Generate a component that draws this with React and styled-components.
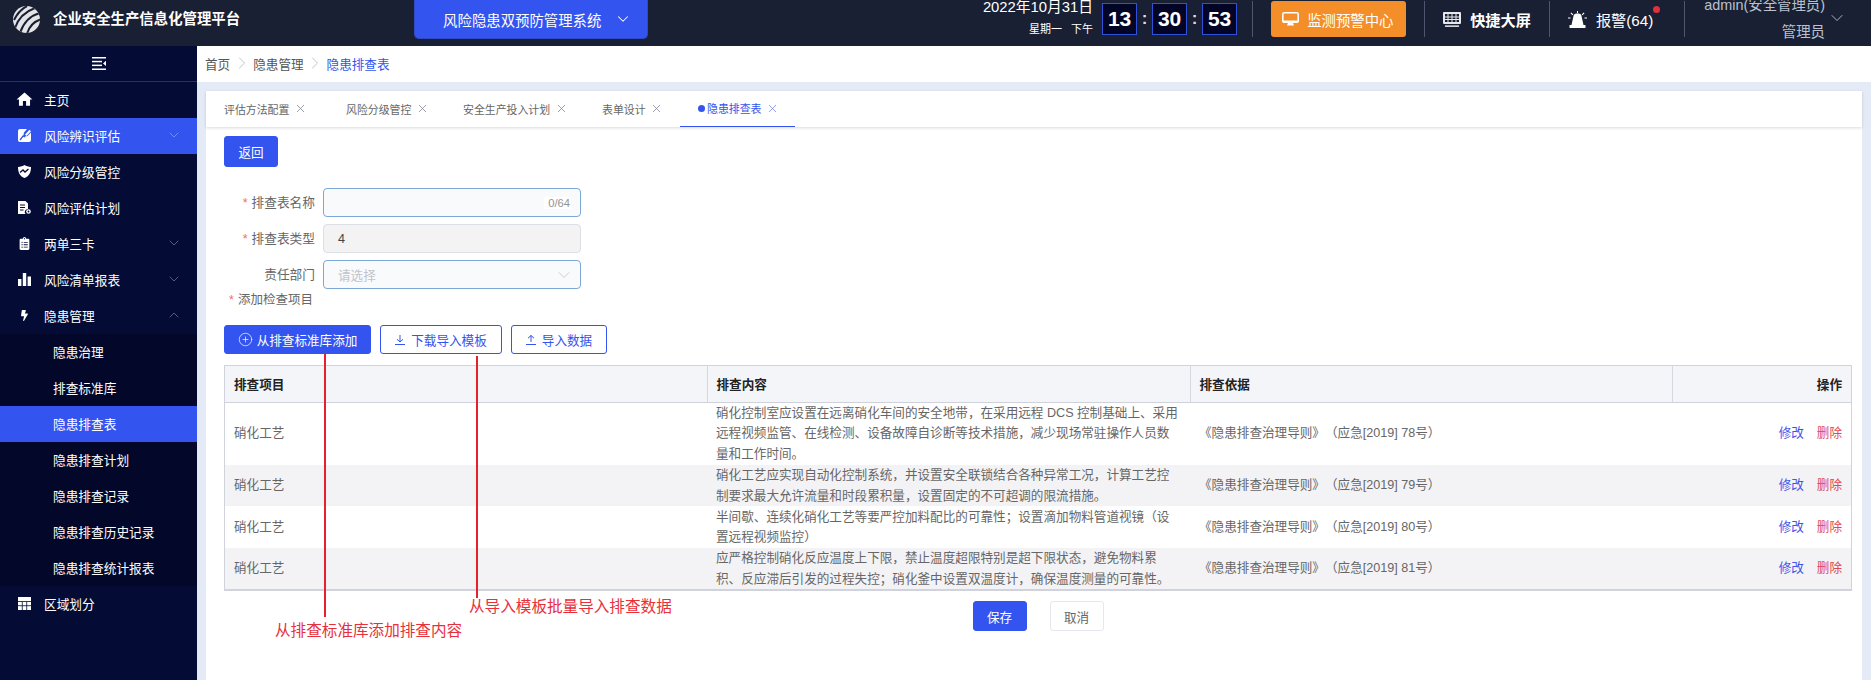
import React from 'react';
import styled, { createGlobalStyle } from 'styled-components';
import { ChevronDown, ChevronUp, ChevronRight, X, CirclePlus } from 'lucide-react';
import { FaBolt, FaClipboardList } from 'react-icons/fa';
import { MdHome } from 'react-icons/md';

const Global = createGlobalStyle`
  html, body { margin: 0; padding: 0; width: 100%; height: 100%; overflow: hidden; background: #fff; }
  #root { width: 100%; height: 100%; }
  * { box-sizing: border-box; }
  body { font-family: "Liberation Sans", "Noto Sans CJK SC", sans-serif; font-size: 12.6px; color: #606266; text-spacing-trim: space-all; }
`;

const Page = styled.div`display: flex; flex-direction: column; width: 1871px; height: 680px; overflow: hidden;`;

const Header = styled.header`
  flex: none; height: 46px; background: #1a2033; display: flex; align-items: flex-start; overflow: hidden; color: #fff;
`;
const LogoWrap = styled.div`margin: 6px 0 0 13px; width: 27px; height: 27px; flex: none;`;
const Title = styled.h1`
  margin: 0 0 0 13px; font-size: 14.4px; font-weight: 700; line-height: 39px; color: #fff; white-space: nowrap;
`;
const SystemButton = styled.button`
  margin-left: 174px; width: 234px; height: 39px; flex: none; border: 1px solid #2f4ac4; border-top: 0; border-radius: 0 0 5px 5px;
  background: #3354ee; color: #fff; font: inherit; font-size: 14.4px; display: flex; align-items: center; padding: 0 0 0 28px; gap: 13px;
`;
const HeaderRight = styled.div`margin-left: auto; display: flex; align-items: flex-start; padding-right: 24px;`;
const DateBlock = styled.div`
  margin-top: -4px; text-align: right; line-height: 22px; width: 112px; white-space: nowrap;
`;
const DateLine = styled.div`font-size: ${p => p.$small ? '11px' : '14.8px'};`;
const Clock = styled.div`margin: 3px 0 0 9px; display: flex; align-items: center;`;
const ClockBox = styled.div`
  width: 35px; height: 32px; background: #020526; border: 1px solid #2f52d8; font-size: 21px; font-weight: 700; color: #fff;
  display: flex; align-items: center; justify-content: center;
`;
const Colon = styled.span`width: 15px; text-align: center; font-size: 17px; font-weight: 700; color: #ddd; line-height: 28px;`;
const Divider = styled.div`width: 1px; height: 36px; margin: 1px 0 0 ${p => p.$ml || 18}px; background: #4d566e;`;
const AlertButton = styled.button`
  margin: 1px 0 0 18px; width: 135px; height: 36px; background: #f38e29; border: 0; border-radius: 3px; color: #fff; font: inherit; font-size: 14.4px;
  display: flex; align-items: center; padding: 0 0 0 11px; gap: 8px; white-space: nowrap;
`;
const HeaderLink = styled.div`
  margin-left: 18px; height: 38px; display: flex; align-items: center; gap: 9px; color: #fff; white-space: nowrap;
  font-size: 15.2px; font-weight: ${p => p.$bold ? 700 : 400}; position: relative;
`;
const RedDot = styled.span`
  position: absolute; right: -7px; top: 6px; width: 7px; height: 7px; border-radius: 50%; background: #e0303c;
`;
const UserBlock = styled.div`
  margin: -8px 0 0 19px; text-align: right; line-height: 27px; color: #b9c0cf; font-size: 14.4px; white-space: nowrap;
`;
const UserChevron = styled.div`margin: 8px 0 0 2px; color: #b9c0cf; display: flex;`;

const Body = styled.div`flex: 1; display: flex; min-height: 0;`;
const Sidebar = styled.nav`width: 197px; flex: none; background: #040c36; color: #fff;`;
const Collapse = styled.div`height: 36px; border-bottom: 1px solid #2c3356; display: flex; align-items: center; justify-content: center;`;
const MenuItem = styled.div`
  height: 36px; display: flex; align-items: center; padding: 0 0 2px 17px; font-size: 12.7px; color: #fff; white-space: nowrap;
  background: ${p => p.$active ? '#3354ee' : 'transparent'};
`;
const MenuIcon = styled.span`
  width: 14px; height: 14px; display: flex; align-items: center; justify-content: center; margin-right: 13px; flex: none;
  svg { flex: none; }
`;
const MenuArrow = styled.span`margin-left: auto; margin-right: 15px; display: flex; color: ${p => p.$active ? '#8b9bf0' : '#6b7192'};`;
const SubMenu = styled.div`background: #03082b;`;
const SubItem = styled.div`
  height: 36px; display: flex; align-items: center; padding: 0 0 2px 53px; font-size: 12.7px; color: #fff;
  background: ${p => p.$active ? '#3354ee' : 'transparent'};
`;

const Main = styled.main`flex: 1; min-width: 0; background: #e4eaf6; display: flex; flex-direction: column;`;
const Breadcrumb = styled.div`
  flex: none; height: 36px; background: #fff; display: flex; align-items: center; padding: 0 0 2px 8px; font-size: 12.6px; color: #555;
`;
const Crumb = styled.span`color: ${p => p.$current ? '#3354ee' : '#555'};`;
const CrumbSep = styled.span`display: flex; color: #c0c4cc; margin: 0 1.5px;`;
const Panel = styled.section`
  position: relative; flex: 1; margin: 9px 9px 0; background: #fff; display: flex; flex-direction: column; min-height: 0;
`;
const Tabs = styled.div`flex: none; height: 36px; display: flex; box-shadow: 0 1px 3px rgba(0,0,0,.15);`;
const Tab = styled.div`
  width: ${p => p.$w}px; height: 36px; padding: 0 0 1px 18px; display: flex; align-items: center; font-size: 10.9px; white-space: nowrap;
  color: ${p => p.$active ? '#3354ee' : '#666'};
  border-bottom: ${p => p.$active ? '1px solid #3354ee' : '0'};
`;
const TabDot = styled.span`width: 7px; height: 7px; border-radius: 50%; background: #3354ee; margin-right: 2px;`;
const TabClose = styled.span`
  display: flex; width: 8px; justify-content: center; margin-left: 7px; color: ${p => p.$active ? '#7f8bee' : '#888d99'};
  svg { flex: none; }
`;
const Content = styled.div`flex: 1; padding: 9px 10px 0 18px; display: flex; flex-direction: column; align-items: flex-start;`;
const Button = styled.button`
  height: ${p => p.$h || 29}px; width: ${p => p.$w}px; flex: none; border-radius: 3px; font: inherit; font-size: 12.6px; white-space: nowrap; padding: 0;
  display: flex; align-items: center; justify-content: center; gap: ${p => p.$gap || 0}px;
  background: ${p => p.$variant === 'outline' || p.$variant === 'plain' ? '#fff' : '#3354ee'};
  color: ${p => p.$variant === 'outline' ? '#3354ee' : p.$variant === 'plain' ? '#666' : '#fff'};
  border: 1px solid ${p => p.$variant === 'plain' ? '#e4e7ed' : '#3354ee'};
`;
const Form = styled.div`margin-top: 21px; display: flex; flex-direction: column; gap: 7px;`;
const FormRow = styled.div`display: flex; align-items: center; height: 29px;`;
const Label = styled.label`width: 91px; text-align: right; margin-right: 8px; padding-bottom: 2px; font-size: 12.7px; color: #666; white-space: nowrap;`;
const Star = styled.span`color: #f56c6c; margin-right: 4px;`;
const Field = styled.div`
  width: 258px; height: 29px; border-radius: 4px; display: flex; align-items: center; padding: 0 ${p => p.$placeholder ? 6 : 9}px 0 14px;
  background: ${p => p.$disabled ? '#f3f3f3' : '#f8fafc'};
  border: 1px solid ${p => p.$disabled ? '#dcdfe6' : '#7ba8d4'};
  color: ${p => p.$placeholder ? '#c0c4cc' : '#444'};
`;
const Counter = styled.span`margin-left: auto; background: #fff; font-size: 11.2px; padding: 0 1px 0 4px; color: #909399;`;
const FieldChevron = styled.span`margin-left: auto; display: flex; color: #c0c4cc;`;
const SectionLabel = styled.div`margin: 4px 0 0 5px; font-size: 12.5px; line-height: 14px; height: 14px; color: #666; white-space: nowrap;`;
const Toolbar = styled.div`margin-top: 18px; display: flex; gap: 9px;`;
const TableWrap = styled.div`margin-top: 11px; width: 1628px; border: 1px solid #d0d3dc; border-bottom-width: 2px;`;
const Grid = styled.table`width: 1626px; border-collapse: collapse; table-layout: fixed; font-size: 12.6px;`;
const Th = styled.th`
  height: 36px; padding: 0 9px; background: #f4f5f9; color: #222; font-weight: 700; font-size: 12.6px;
  text-align: ${p => p.$right ? 'right' : 'left'};
  border-bottom: 1px solid #cfd2da; border-right: ${p => p.$last ? '0' : '1px solid #d6d8e0'};
`;
const Tr = styled.tr`height: ${p => p.$h}px; background: ${p => p.$alt ? '#f3f3f6' : '#fff'};`;
const Td = styled.td`
  padding: 0 9px; color: #666; line-height: 20.6px; white-space: nowrap; vertical-align: middle; text-align: ${p => p.$right ? 'right' : 'left'};
`;
const Line = styled.div`white-space: nowrap;`;
const ActionLink = styled.a`margin-left: 13px; color: ${p => p.$danger ? '#e0484f' : '#3f56e8'};`;
const Footer = styled.div`width: 1628px; margin-top: 10px; display: flex; justify-content: center; gap: 23px;`;

const RedLine = styled.div`
  position: absolute; width: 2px; left: ${p => p.$x}px; top: ${p => p.$y}px; height: ${p => p.$h}px; background: #e6212e;
`;
const Note = styled.div`
  position: absolute; left: ${p => p.$x}px; top: ${p => p.$y}px; color: #e8303c; font-size: 15.6px; line-height: 20px; white-space: nowrap;
`;

const Logo = () => (
  <svg width="27" height="27" viewBox="0 0 27 27">
    <defs><clipPath id="lg"><circle cx="13.5" cy="13.5" r="13.5" /></clipPath></defs>
    <g clipPath="url(#lg)">
      <rect width="27" height="27" fill="#e4e4e6" />
      <g fill="none" stroke="#1a2033" strokeWidth="2">
        <path d="M1 14C4 8 8 3 14 0" />
        <path d="M2 22C5 13 11 6 22 2" />
        <path d="M7 27C10 18 16 10 27 7" />
        <path d="M14 28C16 21 21 15 29 13" />
        <path d="M21 29C22 25 25 22 29 20" />
      </g>
    </g>
  </svg>
);
const CollapseIcon = () => (
  <svg width="14" height="13" viewBox="0 0 14 13" fill="#fff">
    <rect width="14" height="1.5" />
    <rect y="3.8" width="10" height="1.5" />
    <rect y="7.6" width="10" height="1.5" />
    <rect y="11.5" width="14" height="1.5" />
    <path d="M14 3.8v5.2l-3-2.6z" />
  </svg>
);
const EditIcon = () => (
  <svg width="13" height="13" viewBox="0 0 13 13">
    <path d="M2 0h7L6 3.500 5 8l4.500-1L13 3.500V11a2 2 0 0 1-2 2H2a2 2 0 0 1-2-2V2a2 2 0 0 1 2-2z" fill="#fff" />
    <path d="M2 11L5 7l2 1" fill="none" stroke="#3354ee" strokeWidth="1.300" />
    <path d="M7 5.500L11.500.8 13 2.200 8.500 7z" fill="#fff" />
  </svg>
);
const ShieldIcon = () => (
  <svg width="13" height="13" viewBox="0 0 13 13">
    <path d="M6.5 0C8 1.2 10.5 1.8 13 2c0 5-1.5 9-6.5 11C1.500 11 0 7 0 2c2.500-.2 5-.8 6.500-2z" fill="#fff" />
    <path d="M2 7.500L5 5l2 2 3.500-3" fill="none" stroke="#040c36" strokeWidth="1.300" />
  </svg>
);
const DocIcon = () => (
  <svg width="13" height="13" viewBox="0 0 13 13">
    <path d="M0 0h7.500L10 2.500V8a3 3 0 0 0-2.500 5H0z" fill="#fff" />
    <path d="M2 4h5M2 6.500h5M2 9h3.500" stroke="#040c36" strokeWidth="1" />
    <circle cx="10.500" cy="10.500" r="2.300" fill="#fff" />
    <circle cx="10.500" cy="10.500" r=".9" fill="#040c36" />
  </svg>
);
const BarsIcon = () => (
  <svg width="13" height="13" viewBox="0 0 13 13" fill="#fff">
    <rect y="6" width="3.400" height="7" />
    <rect x="4.800" y="0" width="3.400" height="13" />
    <rect x="9.600" y="3.500" width="3.400" height="9.500" />
  </svg>
);
const TableIcon = () => (
  <svg width="13" height="13" viewBox="0 0 13 13">
    <rect width="13" height="13" fill="#fff" />
    <path d="M0 4.500h13M0 8.700h13M4.300 4.500V13M8.700 4.500V13" stroke="#040c36" strokeWidth=".8" />
  </svg>
);
const MonitorIcon = () => (
  <svg width="17" height="14" viewBox="0 0 17 14">
    <rect x=".8" y=".8" width="15.400" height="9.400" rx="1.200" fill="none" stroke="#fff" strokeWidth="1.600" />
    <rect x="1" y="8.500" width="15" height="2.200" fill="#fff" />
    <path d="M6 11h5l1 2.500H5z" fill="#fff" />
  </svg>
);
const ScreenIcon = () => (
  <svg width="18" height="15" viewBox="0 0 18 15" fill="#e8e8ec">
    <path d="M1 0h16a1 1 0 0 1 1 1v10a1 1 0 0 1-1 1H1a1 1 0 0 1-1-1V1a1 1 0 0 1 1-1zm1 2v8h14V2z" />
    <path d="M4.500 2h1v8h-1zM8.500 2h1v8h-1zM12.500 2h1v8h-1zM2 4.500h14v1H2zM2 7h14v1H2z" />
    <rect x="2" y="13.400" width="14" height="1.500" />
  </svg>
);
const AlarmIcon = () => (
  <svg width="19" height="17" viewBox="0 0 19 17" fill="#fff">
    <path d="M5.500 5C5.500 3 8 2.500 9.500 2.500S13.500 3 13.500 5L15.500 14h-12z" />
    <rect x="1.500" y="14" width="16" height="3" rx=".5" />
    <path d="M9 0h1v2H9zM2.500 2.300l.8-.7 2 1.900-.8.700zM16.500 2.300l-.8-.7-2 1.900.8.700z" />
    <path d="M0 6.500h2.500v1H0zM16.500 6.500H19v1h-2.500z" />
  </svg>
);
const DownIcon = () => (
  <svg width="10" height="10" viewBox="0 0 10 10" fill="none" stroke="currentColor" strokeWidth="1">
    <path d="M0 9.500h10M5 0v7M2 4.300L5 7l3-2.700" />
  </svg>
);
const UpIcon = () => (
  <svg width="10" height="10" viewBox="0 0 10 10" fill="none" stroke="currentColor" strokeWidth="1">
    <path d="M0 9.500h10M5 7V.5M2 3.200L5 .5l3 2.700" />
  </svg>
);

const tabs = [['评估方法配置', 122], ['风险分级管控', 117], ['安全生产投入计划', 139], ['表单设计', 96]];
const rows = [
  { h: 63, lines: ['硝化控制室应设置在远离硝化车间的安全地带，在采用远程 DCS 控制基础上、采用', '远程视频监管、在线检测、设备故障自诊断等技术措施，减少现场常驻操作人员数', '量和工作时间。'], no: 78 },
  { h: 41, alt: true, lines: ['硝化工艺应实现自动化控制系统，并设置安全联锁结合各种异常工况，计算工艺控', '制要求最大允许流量和时段累积量，设置固定的不可超调的限流措施。'], no: 79 },
  { h: 42, lines: ['半间歇、连续化硝化工艺等要严控加料配比的可靠性；设置滴加物料管道视镜（设', '置远程视频监控）'], no: 80 },
  { h: 41, alt: true, lines: ['应严格控制硝化反应温度上下限，禁止温度超限特别是超下限状态，避免物料累', '积、反应滞后引发的过程失控；硝化釜中设置双温度计，确保温度测量的可靠性。'], no: 81 },
];
const subs = ['隐患治理', '排查标准库', '隐患排查表', '隐患排查计划', '隐患排查记录', '隐患排查历史记录', '隐患排查统计报表'];
const menu1 = [
  { t: '主页', i: <MdHome size={19} /> },
  { t: '风险辨识评估', i: <EditIcon />, a: true, arrow: true },
  { t: '风险分级管控', i: <ShieldIcon /> },
  { t: '风险评估计划', i: <DocIcon /> },
  { t: '两单三卡', i: <FaClipboardList size={13} />, arrow: true },
  { t: '风险清单报表', i: <BarsIcon />, arrow: true },
];

export default function App() {
  return (
    <Page>
      <Global />
      <Header>
        <LogoWrap><Logo /></LogoWrap>
        <Title>企业安全生产信息化管理平台</Title>
        <SystemButton>风险隐患双预防管理系统<ChevronDown size={18} strokeWidth={1.4} /></SystemButton>
        <HeaderRight>
          <DateBlock>
            <DateLine>2022年10月31日</DateLine>
            <DateLine $small>星期一&nbsp;&nbsp;&nbsp;下午</DateLine>
          </DateBlock>
          <Clock>
            <ClockBox>13</ClockBox><Colon>:</Colon><ClockBox>30</ClockBox><Colon>:</Colon><ClockBox>53</ClockBox>
          </Clock>
          <Divider $ml={15} />
          <AlertButton><MonitorIcon />监测预警中心</AlertButton>
          <Divider />
          <HeaderLink $bold><ScreenIcon />快捷大屏</HeaderLink>
          <Divider />
          <HeaderLink><AlarmIcon />报警(64)<RedDot /></HeaderLink>
          <Divider $ml={31} />
          <UserBlock><div>admin(安全管理员)</div><div>管理员</div></UserBlock>
          <UserChevron><ChevronDown size={20} strokeWidth={1.1} /></UserChevron>
        </HeaderRight>
      </Header>
      <Body>
        <Sidebar>
          <Collapse><CollapseIcon /></Collapse>
          {menu1.map(m => (
            <MenuItem key={m.t} $active={m.a}>
              <MenuIcon>{m.i}</MenuIcon>{m.t}
              {m.arrow && <MenuArrow $active={m.a}><ChevronDown size={16} strokeWidth={1.2} /></MenuArrow>}
            </MenuItem>
          ))}
          <MenuItem>
            <MenuIcon><FaBolt size={11} /></MenuIcon>隐患管理
            <MenuArrow><ChevronUp size={16} strokeWidth={1.2} /></MenuArrow>
          </MenuItem>
          <SubMenu>
            {subs.map(s => <SubItem key={s} $active={s === '隐患排查表'}>{s}</SubItem>)}
          </SubMenu>
          <MenuItem><MenuIcon><TableIcon /></MenuIcon>区域划分</MenuItem>
        </Sidebar>
        <Main>
          <Breadcrumb>
            <Crumb>首页</Crumb><CrumbSep><ChevronRight size={20} strokeWidth={1.2} /></CrumbSep>
            <Crumb>隐患管理</Crumb><CrumbSep><ChevronRight size={20} strokeWidth={1.2} /></CrumbSep>
            <Crumb $current>隐患排查表</Crumb>
          </Breadcrumb>
          <Panel>
            <Tabs>
              {tabs.map(([t, w]) => <Tab key={t} $w={w}>{t}<TabClose><X size={13} strokeWidth={1.5} /></TabClose></Tab>)}
              <Tab $active $w={115}><TabDot />隐患排查表<TabClose $active><X size={13} strokeWidth={1.5} /></TabClose></Tab>
            </Tabs>
            <Content>
              <Button $w={54} $h={31}>返回</Button>
              <Form>
                <FormRow><Label><Star>*</Star>排查表名称</Label><Field><Counter>0/64</Counter></Field></FormRow>
                <FormRow><Label><Star>*</Star>排查表类型</Label><Field $disabled>4</Field></FormRow>
                <FormRow><Label>责任部门</Label><Field $placeholder>请选择<FieldChevron><ChevronDown size={20} strokeWidth={1} /></FieldChevron></Field></FormRow>
              </Form>
              <SectionLabel><Star>*</Star>添加检查项目</SectionLabel>
              <Toolbar>
                <Button $w={147} $gap={4}><CirclePlus size={15} strokeWidth={1.1} />从排查标准库添加</Button>
                <Button $w={122} $variant="outline" $gap={6}><DownIcon />下载导入模板</Button>
                <Button $w={96} $variant="outline" $gap={6}><UpIcon />导入数据</Button>
              </Toolbar>
              <TableWrap>
                <Grid>
                  <colgroup><col width="482" /><col width="483" /><col width="482" /><col width="179" /></colgroup>
                  <thead>
                    <tr><Th>排查项目</Th><Th>排查内容</Th><Th>排查依据</Th><Th $right $last>操作</Th></tr>
                  </thead>
                  <tbody>
                    {rows.map(r => (
                      <Tr key={r.no} $h={r.h} $alt={r.alt}>
                        <Td>硝化工艺</Td>
                        <Td>{r.lines.map(l => <Line key={l}>{l}</Line>)}</Td>
                        <Td>《隐患排查治理导则》（应急[2019] {r.no}号）</Td>
                        <Td $right><ActionLink>修改</ActionLink><ActionLink $danger>删除</ActionLink></Td>
                      </Tr>
                    ))}
                  </tbody>
                </Grid>
              </TableWrap>
              <Footer>
                <Button $w={54} $h={30}>保存</Button>
                <Button $w={54} $h={30} $variant="plain">取消</Button>
              </Footer>
            </Content>
            <RedLine $x={118} $y={262} $h={264} />
            <RedLine $x={270} $y={265} $h={242} />
            <Note $x={263} $y={506}>从导入模板批量导入排查数据</Note>
            <Note $x={69} $y={530}>从排查标准库添加排查内容</Note>
          </Panel>
        </Main>
      </Body>
    </Page>
  );
}
